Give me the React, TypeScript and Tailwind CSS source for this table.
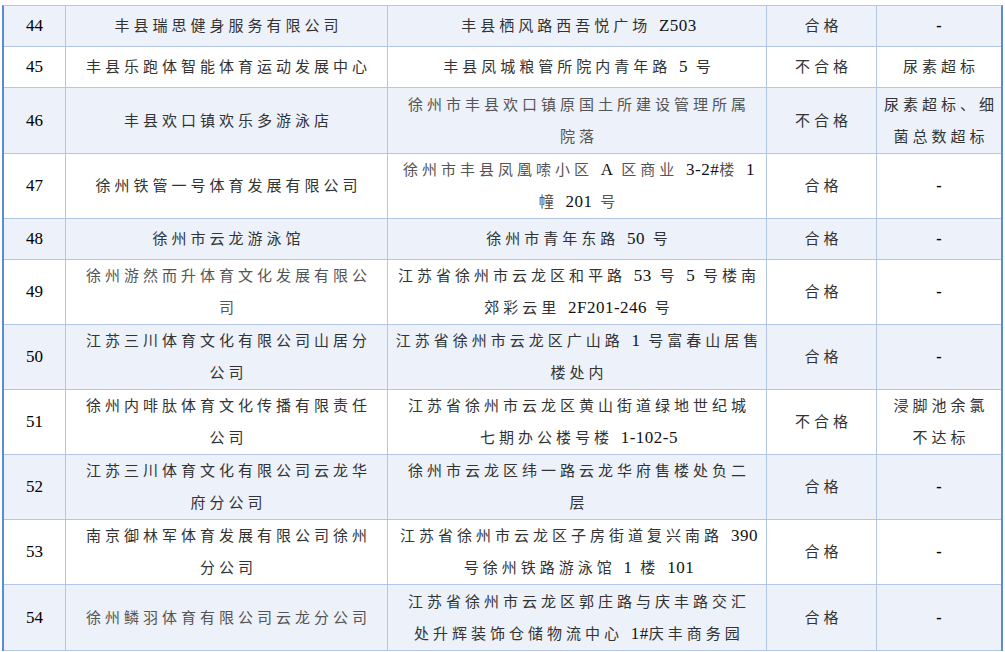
import React from "react";

type Row = {
  no: string;
  name: string[];
  addr: string[];
  result: string;
  note: string[];
  h: string;
  alt: boolean;
  nameLight?: boolean;
  addrLight?: boolean;
};

const rows: Row[] = [
  { no: "44", name: ["丰县瑞思健身服务有限公司"], addr: ["丰县栖风路西吾悦广场 Z503"], result: "合格", note: ["-"], h: "h-[41px]", alt: true },
  { no: "45", name: ["丰县乐跑体智能体育运动发展中心"], addr: ["丰县凤城粮管所院内青年路 5 号"], result: "不合格", note: ["尿素超标"], h: "h-[41px]", alt: false },
  { no: "46", name: ["丰县欢口镇欢乐多游泳店"], addr: ["徐州市丰县欢口镇原国土所建设管理所属", "院落"], result: "不合格", note: ["尿素超标、细", "菌总数超标"], h: "h-[66px]", alt: true, addrLight: true },
  { no: "47", name: ["徐州铁管一号体育发展有限公司"], addr: ["徐州市丰县凤凰嗦小区 A 区商业 3-2#楼 1", "幢 201 号"], result: "合格", note: ["-"], h: "h-[65px]", alt: false, addrLight: true },
  { no: "48", name: ["徐州市云龙游泳馆"], addr: ["徐州市青年东路 50 号"], result: "合格", note: ["-"], h: "h-[41px]", alt: true },
  { no: "49", name: ["徐州游然而升体育文化发展有限公", "司"], addr: ["江苏省徐州市云龙区和平路 53 号 5 号楼南", "郊彩云里 2F201-246 号"], result: "合格", note: ["-"], h: "h-[65px]", alt: false, nameLight: true },
  { no: "50", name: ["江苏三川体育文化有限公司山居分", "公司"], addr: ["江苏省徐州市云龙区广山路 1 号富春山居售", "楼处内"], result: "合格", note: ["-"], h: "h-[65px]", alt: true },
  { no: "51", name: ["徐州内啡肽体育文化传播有限责任", "公司"], addr: ["江苏省徐州市云龙区黄山街道绿地世纪城", "七期办公楼号楼 1-102-5"], result: "不合格", note: ["浸脚池余氯", "不达标"], h: "h-[65px]", alt: false },
  { no: "52", name: ["江苏三川体育文化有限公司云龙华", "府分公司"], addr: ["徐州市云龙区纬一路云龙华府售楼处负二", "层"], result: "合格", note: ["-"], h: "h-[65px]", alt: true },
  { no: "53", name: ["南京御林军体育发展有限公司徐州", "分公司"], addr: ["江苏省徐州市云龙区子房街道复兴南路 390", "号徐州铁路游泳馆 1 楼 101"], result: "合格", note: ["-"], h: "h-[65px]", alt: false },
  { no: "54", name: ["徐州鳞羽体育有限公司云龙分公司"], addr: ["江苏省徐州市云龙区郭庄路与庆丰路交汇", "处升辉装饰仓储物流中心 1#庆丰商务园"], result: "合格", note: ["-"], h: "h-[66px]", alt: true, nameLight: true },
];

function Mixed({ text }: { text: string }) {
  const parts = text.split(/([A-Za-z0-9#\-]+)/);
  return (
    <>
      {parts.map((p, i) =>
        /^[A-Za-z0-9#\-]+$/.test(p) ? (
          <span key={i} className="text-[17px] tracking-[0.5px] text-[#111111]">
            {p}
          </span>
        ) : (
          <span key={i}>{p}</span>
        )
      )}
    </>
  );
}

function Lines({ lines, light }: { lines: string[]; light?: boolean }) {
  return (
    <div className={`flex flex-col items-center leading-[32px] tracking-[4px] pl-[4px] ${light ? "text-[#555555]" : "text-[#333333]"}`}>
      {lines.map((l, i) => (
        <span key={i} className="whitespace-nowrap">
          <Mixed text={l} />
        </span>
      ))}
    </div>
  );
}

export default function App() {
  return (
    <div className="w-[1005px] h-[652px] bg-white overflow-hidden pt-[5px] pl-[2px]">
      <div
        className="w-[1001px] border-l-2 border-r-2 border-t border-l-[#5b8bd5] border-r-[#5b8bd5] border-t-[#b4c6e7] text-[15px]"
        style={{ fontFamily: '"Liberation Serif", "Noto Sans CJK SC", serif' }}
      >
        {rows.map((r) => (
          <div
            key={r.no}
            className={`flex ${r.h} border-b border-[#b4c6e7] ${r.alt ? "bg-[#ecf1fa]" : "bg-white"}`}
          >
            <div className="w-[62px] shrink-0 border-r border-[#b4c6e7] flex items-center justify-center text-[17px] text-black">
              {r.no}
            </div>
            <div className="w-[322px] shrink-0 border-r border-[#b4c6e7] flex items-center justify-center">
              <Lines lines={r.name} light={r.nameLight} />
            </div>
            <div className="w-[379px] shrink-0 border-r border-[#b4c6e7] flex items-center justify-center">
              <Lines lines={r.addr} light={r.addrLight} />
            </div>
            <div className="w-[110px] shrink-0 border-r border-[#b4c6e7] flex items-center justify-center">
              <Lines lines={[r.result]} />
            </div>
            <div className="flex-1 flex items-center justify-center">
              {r.note[0] === "-" ? (
                <span className="text-black font-bold text-[16px]">-</span>
              ) : (
                <Lines lines={r.note} />
              )}
            </div>
          </div>
        ))}
      </div>
    </div>
  );
}
